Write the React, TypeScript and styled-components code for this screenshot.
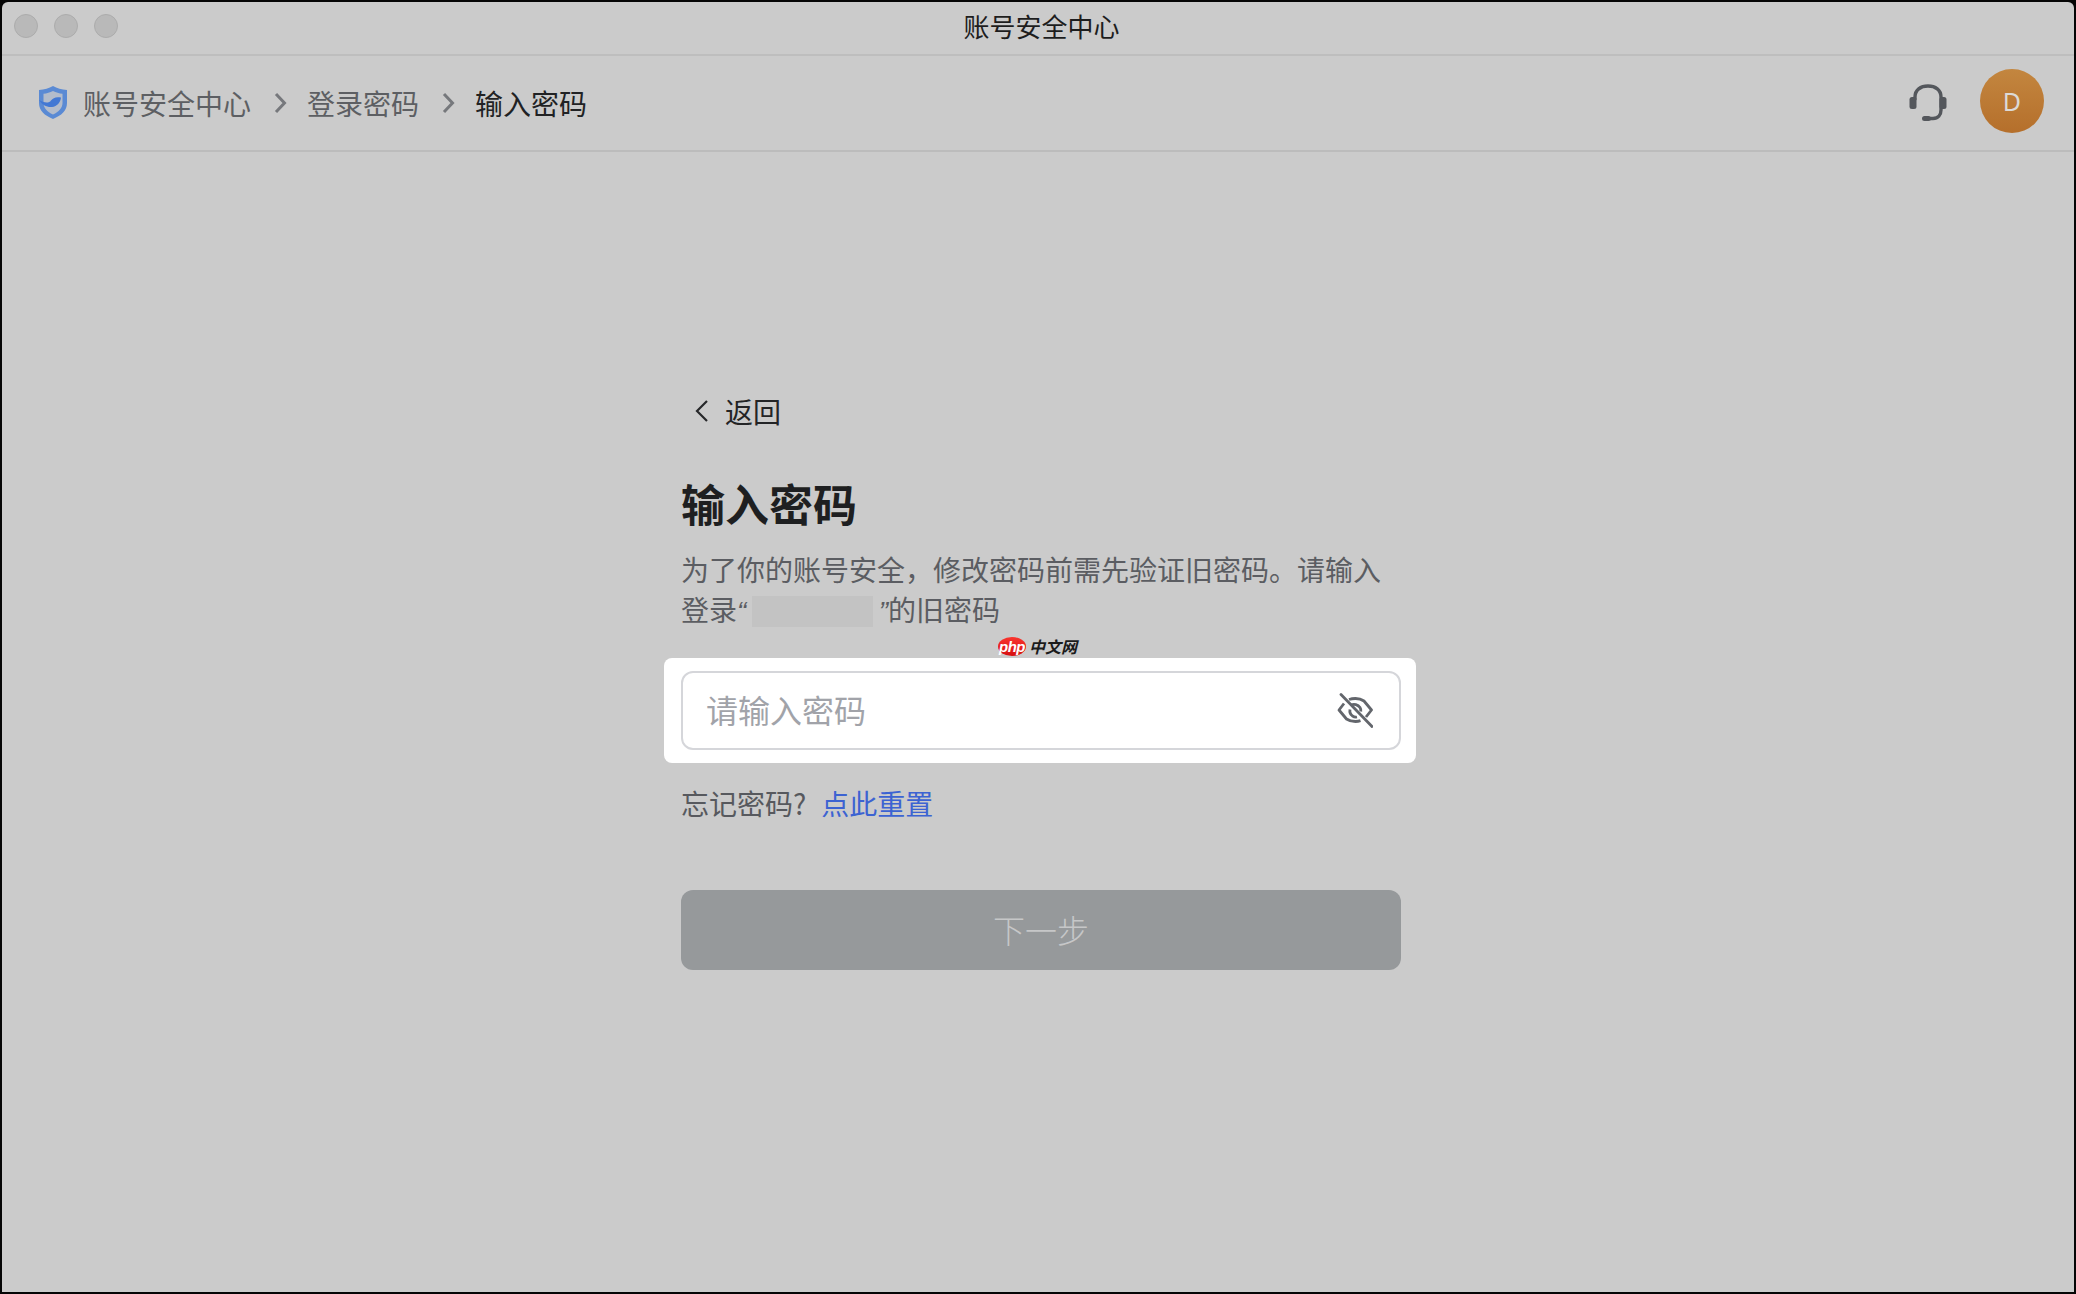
import React from 'react';
import styled, { createGlobalStyle } from 'styled-components';

const cjk = `"Noto Sans CJK SC", "Noto Sans", sans-serif`;

const GlobalStyle = createGlobalStyle`
  html, body {
    margin: 0;
    padding: 0;
    background: #050505;
  }
  #root {
    height: 1294px;
  }
`;

const Page = styled.div`
  box-sizing: border-box;
  width: 2076px;
  height: 1294px;
  padding: 2px;
  overflow: hidden;
  font-family: ${cjk};
`;

const Window = styled.div`
  position: relative;
  display: flex;
  flex-direction: column;
  height: 100%;
  background: #cbcbcb;
  border-radius: 6px 6px 0 0;
`;

const TitleBar = styled.div`
  position: relative;
  display: flex;
  align-items: center;
  justify-content: center;
  box-sizing: border-box;
  height: 54px;
  padding: 0 0 5px 7px;
  border-bottom: 2px solid #bebebe;
  font-size: 26px;
  color: #1d1d1d;
`;

const Lights = styled.div`
  position: absolute;
  left: 12px;
  top: 12px;
  display: flex;
  gap: 16px;
`;

const Light = styled.span`
  box-sizing: border-box;
  width: 24px;
  height: 24px;
  border-radius: 50%;
  background: #b9b9b9;
  border: 1px solid #acacac;
`;

const Header = styled.header`
  display: flex;
  align-items: center;
  justify-content: space-between;
  box-sizing: border-box;
  height: 96px;
  padding: 0 30px 0 36px;
  border-bottom: 2px solid #bcbcbc;
`;

const Crumbs = styled.nav`
  display: flex;
  align-items: center;
  font-size: 28px;
  line-height: 40px;
  margin-top: -1px;
`;

const Crumb = styled.span<{ $current?: boolean }>`
  color: ${(p) => (p.$current ? '#212224' : '#5d5f63')};
`;

const CrumbArrow = styled.svg`
  width: 14px;
  height: 22px;
  margin: 0 20.5px 0 21.5px;
  color: #76787c;
`;

const Shield = styled.svg`
  width: 30px;
  height: 33px;
  margin-right: 15px;
`;

const HeaderRight = styled.div`
  display: flex;
  align-items: center;
  gap: 33px;
  margin-top: -5px;
`;

const Headset = styled.svg`
  width: 38px;
  height: 38px;
  color: #54575c;
  margin-top: 4px;
`;

const Avatar = styled.div`
  display: flex;
  align-items: center;
  justify-content: center;
  width: 64px;
  height: 64px;
  border-radius: 50%;
  background: linear-gradient(180deg, #c3863f 0%, #b56f2b 100%);
  color: #dcdad6;
  font-family: "Noto Sans", sans-serif;
  font-size: 25px;
`;

const Main = styled.main`
  flex: 1;
  display: flex;
  justify-content: center;
  padding: 242px 0 0 6px;
`;

const Column = styled.div`
  width: 720px;
  display: flex;
  flex-direction: column;
`;

const Back = styled.div`
  display: flex;
  align-items: center;
  height: 34px;
  padding-left: 13px;
  font-size: 28px;
  color: #232426;
`;

const BackArrow = styled.svg`
  width: 16px;
  height: 24px;
  margin-right: 15px;
`;

const Title = styled.h1`
  margin: 43px 0 0;
  font-size: 44px;
  line-height: 64px;
  font-weight: 700;
  color: #1e1f21;
`;

const Desc = styled.p`
  margin: 14px 0 0;
  font-size: 28px;
  line-height: 40px;
  color: #5b5d62;
`;

const Quote = styled.span<{ $side: 'left' | 'right' }>`
  display: inline-block;
  width: 15px;
  text-align: ${(p) => p.$side};
  font-family: "Liberation Sans", sans-serif;
  font-style: italic;
`;

const Masked = styled.span`
  display: inline-block;
  width: 121px;
  height: 31px;
  vertical-align: -6px;
  background: #c3c3c3;
`;

const InputHalo = styled.div`
  margin: 26px -15px 0 -17px;
  padding: 13px 15px 13px 17px;
  background: #ffffff;
  border-radius: 8px;
`;

const InputBox = styled.div`
  box-sizing: border-box;
  display: flex;
  align-items: center;
  justify-content: space-between;
  height: 79px;
  padding: 0 26px 0 23px;
  border: 2px solid #d5d6da;
  border-radius: 12px;
  background: #ffffff;
`;

const Input = styled.input`
  flex: 1;
  border: 0;
  outline: 0;
  padding: 0 0 3px;
  background: transparent;
  font-family: ${cjk};
  font-size: 32px;
  color: #222;
  &::placeholder {
    color: #a1a3a9;
    opacity: 1;
  }
`;

const EyeOff = styled.svg`
  width: 36px;
  height: 36px;
  margin-top: -2px;
  color: #63666c;
`;

const Forgot = styled.div`
  margin-top: 20px;
  font-size: 28px;
  line-height: 41px;
  color: #57595e;
`;

const ResetLink = styled.a`
  margin-left: 15px;
  color: #3c63d2;
  cursor: pointer;
`;

const NextButton = styled.button`
  margin-top: 66px;
  padding: 0 0 3px;
  height: 80px;
  border: 0;
  border-radius: 12px;
  background: #96999b;
  color: #c6c7c8;
  font-family: ${cjk};
  font-size: 32px;
  font-weight: 300;
`;

const Watermark = styled.div`
  position: absolute;
  left: 996px;
  top: 635px;
  display: flex;
  align-items: center;
  gap: 3px;
  height: 19px;
`;

const PhpBadge = styled.span`
  display: flex;
  align-items: center;
  justify-content: center;
  width: 28px;
  height: 19px;
  border-radius: 50%;
  background: linear-gradient(180deg, #f9352e 0%, #d70f10 100%);
  color: #ffffff;
  font-family: "Liberation Sans", sans-serif;
  font-size: 15px;
  font-style: italic;
  font-weight: 700;
  letter-spacing: -0.5px;
`;

const WatermarkText = styled.span`
  font-size: 16px;
  line-height: 19px;
  font-weight: 700;
  font-style: italic;
  color: #1b1b1b;
`;

const Chevron = () => (
  <CrumbArrow viewBox="0 0 14 22" fill="none" stroke="currentColor" strokeWidth="3">
    <path d="M3 2l8.500 9-8.500 9" />
  </CrumbArrow>
);

export default function App() {
  return (
    <>
      <GlobalStyle />
      <Page>
        <Window>
          <TitleBar>
            <Lights>
              <Light />
              <Light />
              <Light />
            </Lights>
            账号安全中心
          </TitleBar>
          <Header>
            <Crumbs>
              <Shield viewBox="0 0 30 33">
                <path d="M15 0c4 2.400 8.500 3.600 14 4v13c0 7.500-5.500 12.500-14 16C6.500 29.500 1 24.500 1 17V4c5.500-.4 10-1.600 14-4z" fill="#5a8ad4" />
                <path d="M15 5c3 1.500 6.200 2.400 9.500 2.800V17c0 5-3.600 8.700-9.500 11.500C9.100 25.700 5.500 22 5.500 17V7.800C8.800 7.400 12 6.500 15 5z" fill="#b3bccb" />
                <path d="M1 14c5 3 10 3.500 12 .5 2-2.700 5-4 10-3-.5 5-4 9-9 9.500C9 21.500 4 19 1 14z" fill="#4278d4" />
              </Shield>
              <Crumb>账号安全中心</Crumb>
              <Chevron />
              <Crumb>登录密码</Crumb>
              <Chevron />
              <Crumb $current>输入密码</Crumb>
            </Crumbs>
            <HeaderRight>
              <Headset viewBox="0 0 38 38" fill="none" stroke="currentColor" strokeWidth="3.400">
                <path d="M6 15v-2C6 6 11.500 2 19 2s13 4 13 11v13c0 5-3 8.500-8 8.500h-3" strokeLinecap="round" />
                <rect x="0.500" y="13" width="7" height="12" rx="2.500" fill="currentColor" stroke="none" />
                <rect x="30.500" y="13" width="7" height="12" rx="2.500" fill="currentColor" stroke="none" />
                <rect x="13" y="32" width="9" height="5" rx="2.500" fill="currentColor" stroke="none" />
              </Headset>
              <Avatar>D</Avatar>
            </HeaderRight>
          </Header>
          <Main>
            <Column>
              <Back>
                <BackArrow viewBox="0 0 16 24" fill="none" stroke="#27282a" strokeWidth="2.200">
                  <path d="M13 2L3 12l10 10" />
                </BackArrow>
                返回
              </Back>
              <Title>输入密码</Title>
              <Desc>
                为了你的账号安全，修改密码前需先验证旧密码。请输入
                <br />
                登录<Quote $side="left">“</Quote><Masked /><Quote $side="right">”</Quote>的旧密码
              </Desc>
              <InputHalo>
                <InputBox>
                  <Input placeholder="请输入密码" readOnly />
                  <EyeOff viewBox="0 0 36 36" fill="none" stroke="currentColor" strokeWidth="2.800">
                    <path d="M12 7.500c2-.7 4.200-1 6.500-1 3 0 6 .8 8.500 2.500l7.500 9-5.500 7" strokeLinejoin="round" />
                    <path d="M7 11.500L2 18l7.500 9c2.500 1.700 6 2.500 9 2.500 1.800 0 3.500-.3 5-.8" strokeLinejoin="round" />
                    <path d="M14 13c3-1.500 7-.5 9 2.500.8 1.300 1 2.500.8 4M13 17.500c-.5 2.500.5 5 2.500 6.500 1.500 1 3 1.300 4.500 1" />
                    <path d="M4 2.500l31 32" strokeLinecap="round" />
                  </EyeOff>
                </InputBox>
              </InputHalo>
              <Forgot>
                忘记密码?
                <ResetLink>点此重置</ResetLink>
              </Forgot>
              <NextButton disabled>下一步</NextButton>
            </Column>
          </Main>
          <Watermark>
            <PhpBadge>php</PhpBadge>
            <WatermarkText>中文网</WatermarkText>
          </Watermark>
        </Window>
      </Page>
    </>
  );
}
